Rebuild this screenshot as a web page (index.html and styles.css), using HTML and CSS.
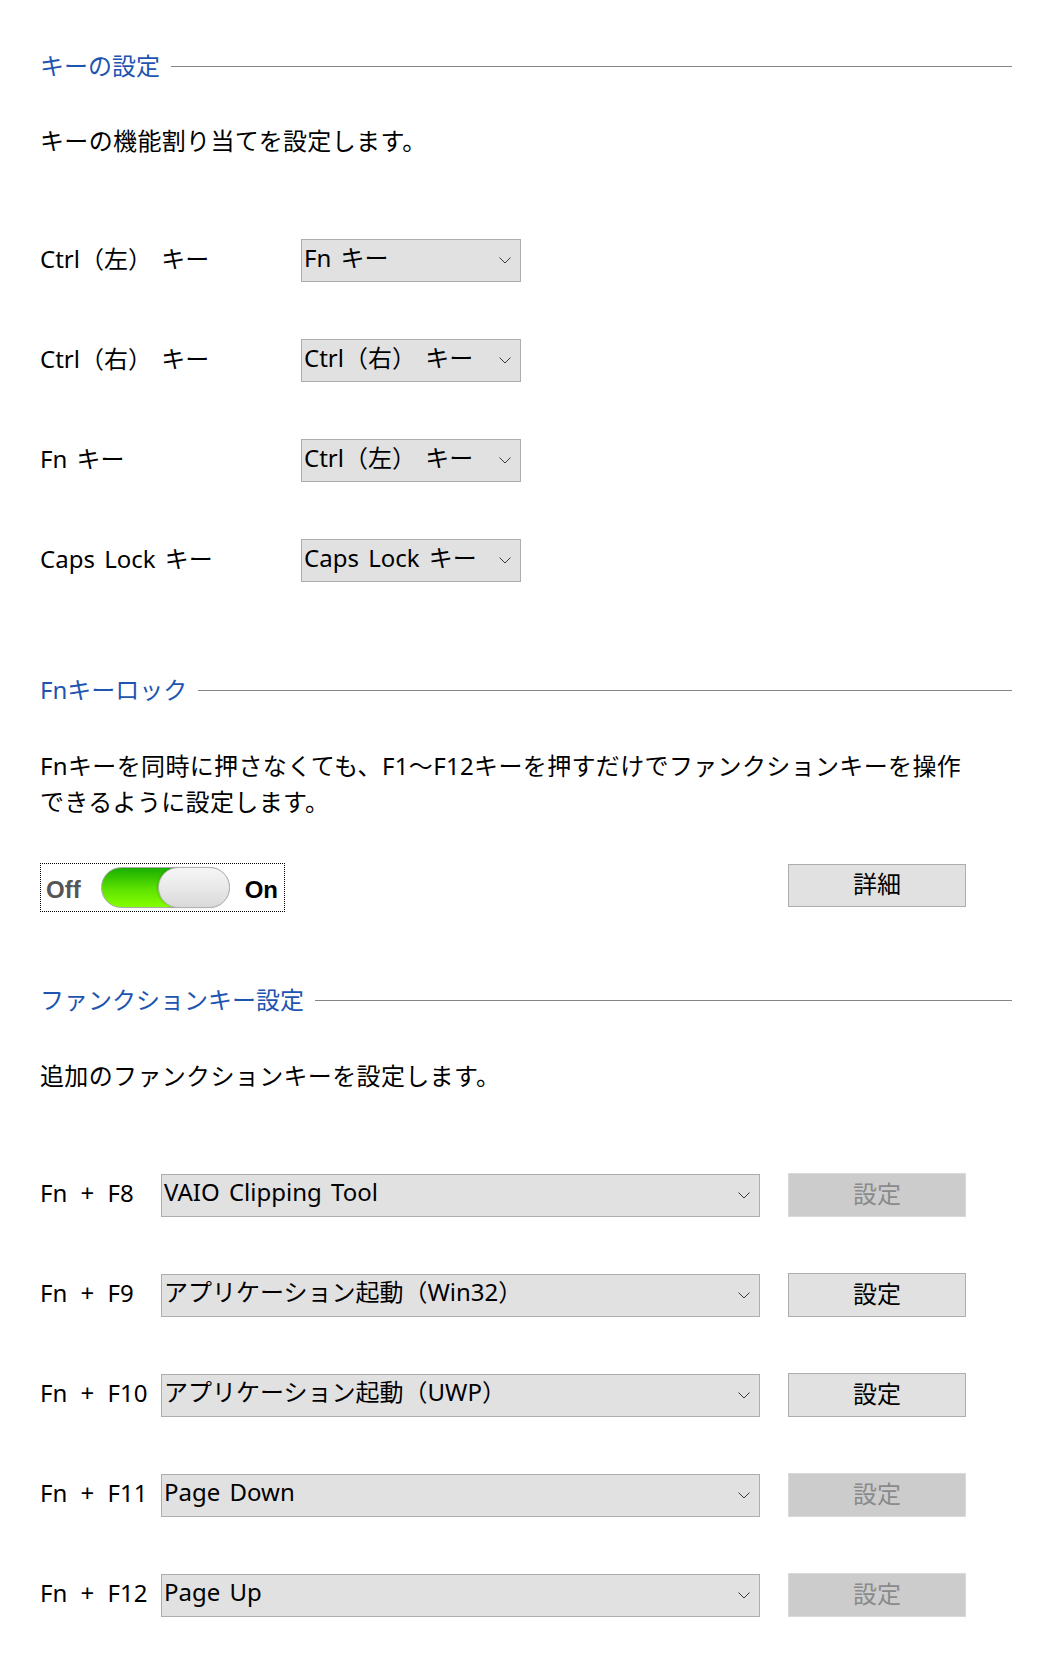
FILE: index.html
```html
<!DOCTYPE html>
<html lang="ja">
<head>
    <meta charset="UTF-8">
    <meta name="viewport" content="width=device-width, initial-scale=1.0">
    <title>キーボード設定</title>
    <link rel="stylesheet" href="styles.css">
</head>
<body>
    <main class="page">
        <!-- Key assignment -->
        <section class="group">
            <h2 class="group-title">キーの設定</h2>
            <p class="group-desc">キーの機能割り当てを設定します。</p>

            <div class="key-rows">
                <div class="key-row">
                    <span class="key-label">Ctrl（左） キー</span>
                    <div class="combo combo-short">
                        <span class="combo-value">Fn キー</span>
                        <svg class="chevron" width="12" height="7" viewBox="0 0 12 7"><path d="M0.5 0.5 L6 6 L11.5 0.5"/></svg>
                    </div>
                </div>
                <div class="key-row">
                    <span class="key-label">Ctrl（右） キー</span>
                    <div class="combo combo-short">
                        <span class="combo-value">Ctrl（右） キー</span>
                        <svg class="chevron" width="12" height="7" viewBox="0 0 12 7"><path d="M0.5 0.5 L6 6 L11.5 0.5"/></svg>
                    </div>
                </div>
                <div class="key-row">
                    <span class="key-label">Fn キー</span>
                    <div class="combo combo-short">
                        <span class="combo-value">Ctrl（左） キー</span>
                        <svg class="chevron" width="12" height="7" viewBox="0 0 12 7"><path d="M0.5 0.5 L6 6 L11.5 0.5"/></svg>
                    </div>
                </div>
                <div class="key-row">
                    <span class="key-label">Caps Lock キー</span>
                    <div class="combo combo-short">
                        <span class="combo-value">Caps Lock キー</span>
                        <svg class="chevron" width="12" height="7" viewBox="0 0 12 7"><path d="M0.5 0.5 L6 6 L11.5 0.5"/></svg>
                    </div>
                </div>
            </div>
        </section>

        <!-- Fn lock -->
        <section class="group group-lock">
            <h2 class="group-title">Fnキーロック</h2>
            <p class="group-desc desc-wrap">Fnキーを同時に押さなくても、F1～F12キーを押すだけでファンクションキーを操作できるように設定します。</p>

            <div class="lock-row">
                <div class="switch-box">
                    <span class="switch-off">Off</span>
                    <div class="switch-track">
                        <div class="switch-knob"></div>
                    </div>
                    <span class="switch-on">On</span>
                </div>
                <button class="btn btn-detail">詳細</button>
            </div>
        </section>

        <!-- Extra function keys -->
        <section class="group group-fn">
            <h2 class="group-title">ファンクションキー設定</h2>
            <p class="group-desc">追加のファンクションキーを設定します。</p>

            <div class="fn-rows">
                <div class="fn-row">
                    <span class="fn-label">Fn + F8</span>
                    <div class="combo combo-wide">
                        <span class="combo-value">VAIO Clipping Tool</span>
                        <svg class="chevron" width="12" height="7" viewBox="0 0 12 7"><path d="M0.5 0.5 L6 6 L11.5 0.5"/></svg>
                    </div>
                    <button class="btn" disabled>設定</button>
                </div>
                <div class="fn-row">
                    <span class="fn-label">Fn + F9</span>
                    <div class="combo combo-wide">
                        <span class="combo-value">アプリケーション起動（Win32）</span>
                        <svg class="chevron" width="12" height="7" viewBox="0 0 12 7"><path d="M0.5 0.5 L6 6 L11.5 0.5"/></svg>
                    </div>
                    <button class="btn">設定</button>
                </div>
                <div class="fn-row">
                    <span class="fn-label">Fn + F10</span>
                    <div class="combo combo-wide">
                        <span class="combo-value">アプリケーション起動（UWP）</span>
                        <svg class="chevron" width="12" height="7" viewBox="0 0 12 7"><path d="M0.5 0.5 L6 6 L11.5 0.5"/></svg>
                    </div>
                    <button class="btn">設定</button>
                </div>
                <div class="fn-row">
                    <span class="fn-label">Fn + F11</span>
                    <div class="combo combo-wide">
                        <span class="combo-value">Page Down</span>
                        <svg class="chevron" width="12" height="7" viewBox="0 0 12 7"><path d="M0.5 0.5 L6 6 L11.5 0.5"/></svg>
                    </div>
                    <button class="btn" disabled>設定</button>
                </div>
                <div class="fn-row">
                    <span class="fn-label">Fn + F12</span>
                    <div class="combo combo-wide">
                        <span class="combo-value">Page Up</span>
                        <svg class="chevron" width="12" height="7" viewBox="0 0 12 7"><path d="M0.5 0.5 L6 6 L11.5 0.5"/></svg>
                    </div>
                    <button class="btn" disabled>設定</button>
                </div>
            </div>
        </section>
    </main>
</body>
</html>
```

FILE: styles.css
```css
body {
    margin: 0;
    font-family: "Noto Sans", "Noto Sans CJK JP", sans-serif;
    font-size: 24px;
    word-spacing: 3px;
    color: #000;
    background-color: #fff;
}

.page {
    padding: 48px 30px 40px 40px;
}

/* Section title with a rule running to the right edge */
.group-title {
    display: flex;
    align-items: center;
    gap: 11px;
    margin: 0;
    font-size: 24px;
    font-weight: normal;
    line-height: 36px;
    color: #1e55b0;
}

.group-title::after {
    content: "";
    flex: 1;
    border-top: 1px solid #858585;
}

.group-lock {
    margin-top: 90px;
}

.group-fn {
    margin-top: 70px;
}

.group-desc {
    margin: 39px 0 0;
    line-height: 36px;
    letter-spacing: 0.35px;
}

.group-lock .group-desc,
.group-fn .group-desc {
    margin-top: 40px;
}

.desc-wrap {
    max-width: 935px;
}

/* Dropdowns */
.combo {
    display: flex;
    align-items: center;
    justify-content: space-between;
    box-sizing: border-box;
    height: 43px;
    padding: 0 9px 0 2px;
    background-color: #e1e1e1;
    border: 1px solid #adadad;
    white-space: nowrap;
}

.combo-value {
    line-height: 1;
    padding-bottom: 6px;
}

.chevron {
    flex-shrink: 0;
}

.chevron path {
    fill: none;
    stroke: #3a3a3a;
    stroke-width: 1;
}

.combo-short {
    width: 220px;
}

.combo-wide {
    width: 599px;
}

/* Key assignment rows */
.key-rows {
    display: flex;
    flex-direction: column;
    gap: 57px;
    margin-top: 80px;
}

.key-row {
    display: flex;
    align-items: center;
}

.key-label {
    width: 261px;
    padding-bottom: 6px;
    white-space: nowrap;
}

/* Fn lock switch */
.lock-row {
    display: flex;
    justify-content: space-between;
    align-items: flex-start;
    margin-top: 43px;
    padding-right: 46px;
}

.switch-box {
    display: inline-flex;
    align-items: center;
    box-sizing: border-box;
    width: 245px;
    height: 49px;
    padding: 4px 0 0 5px;
    border: 1px dotted #000;
    font-family: "Liberation Sans", Arial, sans-serif;
    font-size: 24px;
    font-weight: bold;
}

.switch-off {
    color: #555;
}

.switch-track {
    position: relative;
    box-sizing: border-box;
    width: 129px;
    height: 41px;
    margin: -4px 15px 0 20px;
    border: 1px solid #a9a9a9;
    border-radius: 21px;
    background: linear-gradient(#1aae00, #5ee300 55%, #84ff00);
}

.switch-knob {
    position: absolute;
    top: -1px;
    right: -1px;
    box-sizing: border-box;
    width: 72px;
    height: 41px;
    border: 1px solid #b3b3b3;
    border-radius: 21px;
    background: linear-gradient(#f6f6f6, #e9e9e9 50%, #d9d9d9);
    box-shadow: -1px 0 2px rgba(0, 0, 0, 0.15);
}

.switch-on {
    color: #000;
}

/* Buttons */
.btn {
    box-sizing: border-box;
    width: 178px;
    height: 44px;
    padding: 0 0 6px;
    font-family: inherit;
    font-size: 24px;
    color: #000;
    background-color: #e1e1e1;
    border: 1px solid #adadad;
}

.btn:disabled {
    color: #8a8a8a;
    background-color: #cccccc;
    border-color: #d9d9d9;
}

.btn-detail {
    height: 43px;
    margin-top: 1px;
}

/* Function key rows */
.fn-rows {
    display: flex;
    flex-direction: column;
    gap: 56px;
    margin-top: 79px;
}

.fn-row {
    display: flex;
    align-items: center;
}

.fn-label {
    width: 121px;
    padding-bottom: 6px;
    word-spacing: 7px;
    white-space: nowrap;
}

.fn-row .btn {
    margin-left: 28px;
}
```
